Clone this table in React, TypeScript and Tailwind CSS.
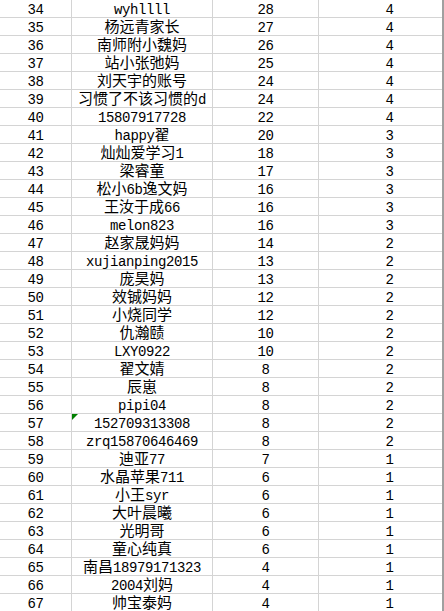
import React from "react";

type Row = [number, string, number, number];

const rows: Row[] = [
  [34, "wyhllll", 28, 4],
  [35, "杨远青家长", 27, 4],
  [36, "南师附小魏妈", 26, 4],
  [37, "站小张弛妈", 25, 4],
  [38, "刘天宇的账号", 24, 4],
  [39, "习惯了不该习惯的d", 24, 4],
  [40, "15807917728", 22, 4],
  [41, "happy翟", 20, 3],
  [42, "灿灿爱学习1", 18, 3],
  [43, "梁睿童", 17, 3],
  [44, "松小6b逸文妈", 16, 3],
  [45, "王汝于成66", 16, 3],
  [46, "melon823", 16, 3],
  [47, "赵家晟妈妈", 14, 2],
  [48, "xujianping2015", 13, 2],
  [49, "庞昊妈", 13, 2],
  [50, "效铖妈妈", 12, 2],
  [51, "小烧同学", 12, 2],
  [52, "仇瀚赜", 10, 2],
  [53, "LXY0922", 10, 2],
  [54, "翟文婧", 8, 2],
  [55, "辰崽", 8, 2],
  [56, "pipi04", 8, 2],
  [57, "152709313308", 8, 2],
  [58, "zrq15870646469", 8, 2],
  [59, "迪亚77", 7, 1],
  [60, "水晶苹果711", 6, 1],
  [61, "小王syr", 6, 1],
  [62, "大叶晨曦", 6, 1],
  [63, "光明哥", 6, 1],
  [64, "童心纯真", 6, 1],
  [65, "南昌18979171323", 4, 1],
  [66, "2004刘妈", 4, 1],
  [67, "帅宝泰妈", 4, 1],
];

function Mixed({ text }: { text: string }) {
  const parts = text.match(/[\x00-\x7F]+|[^\x00-\x7F]+/g) || [];
  return (
    <span className="whitespace-nowrap flex items-baseline h-[17px]">
      {parts.map((p, i) =>
        /^[\x00-\x7F]+$/.test(p) ? (
          <span
            key={i}
            className="text-[14px] tracking-[-0.4px] leading-[20.5px] font-['Liberation_Mono',monospace]"
          >
            {p}
          </span>
        ) : (
          <span
            key={i}
            className="text-[15px] leading-[15px] font-['Noto_Sans_CJK_SC',sans-serif]"
          >
            {p}
          </span>
        )
      )}
    </span>
  );
}

export default function App() {
  return (
    <div className="w-[444px] h-[611px] overflow-hidden bg-white flex">
      <div className="w-[442px] h-[611px] overflow-hidden">
        <div className="w-[461px] flex flex-col">
          {rows.map(([n, name, a, b]) => (
            <div
              key={n}
              className="grid grid-cols-[72px_141px_106px_142px] h-[18px] border-b border-[#d4d4d4] text-black"
            >
              <div className="border-r border-[#d4d4d4] flex justify-center overflow-visible">
                <Mixed text={String(n)} />
              </div>
              <div className="relative border-r border-[#d4d4d4] flex justify-center overflow-visible">
                {n === 57 && (
                  <svg
                    className="absolute left-0 top-0"
                    width="6"
                    height="6"
                    viewBox="0 0 6 6"
                  >
                    <polygon points="0,0 6,0 0,6" fill="#008000" />
                  </svg>
                )}
                <Mixed text={name} />
              </div>
              <div className="border-r border-[#d4d4d4] flex justify-center overflow-visible">
                <Mixed text={String(a)} />
              </div>
              <div className="border-r border-[#d4d4d4] flex justify-center overflow-visible">
                <Mixed text={String(b)} />
              </div>
            </div>
          ))}
        </div>
      </div>
      <div className="w-[2px] h-[611px] bg-[#a0a0a0]" />
    </div>
  );
}
